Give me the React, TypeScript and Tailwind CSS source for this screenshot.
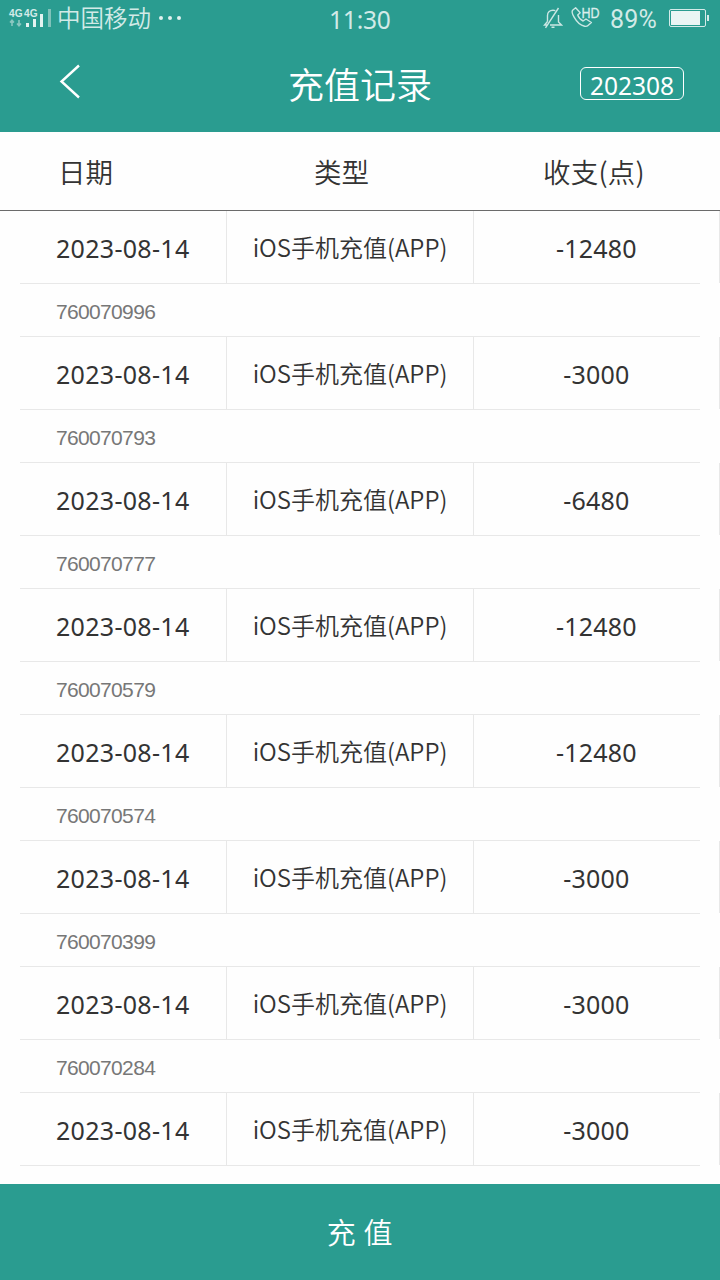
import React from "react";

const records = [
  { id: "760070996", date: "2023-08-14", amount: "-12480" },
  { id: "760070793", date: "2023-08-14", amount: "-3000" },
  { id: "760070777", date: "2023-08-14", amount: "-6480" },
  { id: "760070579", date: "2023-08-14", amount: "-12480" },
  { id: "760070574", date: "2023-08-14", amount: "-12480" },
  { id: "760070399", date: "2023-08-14", amount: "-3000" },
  { id: "760070284", date: "2023-08-14", amount: "-3000" },
  { id: "", date: "2023-08-14", amount: "-3000" },
];

function SignalIcon() {
  return (
    <svg width="44" height="22" viewBox="0 0 44 22" fill="none" className="shrink-0 overflow-visible">
      <g fill="#d4ebe9" fontFamily="Liberation Sans, sans-serif" fontSize="10" fontWeight="700">
        <text x="0" y="9.5" textLength="13.5" lengthAdjust="spacingAndGlyphs">4G</text>
        <text x="15" y="9.5" textLength="13.5" lengthAdjust="spacingAndGlyphs">4G</text>
      </g>
      <path d="M3 19v-5M1 15.500l2-2.200 2 2.200M10 13v5M8 16.500l2 2.200 2-2.200" stroke="#8ac7c0" strokeWidth="1.6" />
      <path d="M17 16h3v4h-3zM24 12h3v8h-3zM31 7h3v13h-3z" fill="#e4f3f1" />
      <path d="M39 2h3v18h-3z" fill="#80c2ba" />
    </svg>
  );
}

function MutedBellIcon() {
  return (
    <svg width="20" height="22" viewBox="0 0 20 22" fill="none" stroke="#cce7e4" strokeWidth="1.4" className="shrink-0">
      <path d="M4.500 14.500 1.500 18h3M4.500 14.500V8.500C4.500 5.200 7 3.200 10 3.200c.8 0 1.600.2 2.300.5M15.500 8v7l3 3H7M8.500 20.300h3M15.500 1 2.500 20.800" />
    </svg>
  );
}

function HdCallIcon() {
  return (
    <svg width="32" height="22" viewBox="0 0 32 22" fill="none" stroke="#cce7e4" strokeWidth="1.4" className="shrink-0 overflow-visible">
      <path d="M4.600 1.800 1.600 4.200c-.8 1-.3 3.800 1.500 7 2.500 4.500 6.500 8.300 10.500 9.100 1.600.3 2.600 0 3.400-.8l3.400-3-5.400-3.500-2.900 2c-2.200-1-4.500-3.500-5.400-6l2.500-2.300z" strokeLinejoin="round" />
      <text x="10.5" y="11.5" fill="#dceeec" stroke="#dceeec" strokeWidth=".3" fontFamily="Liberation Sans, sans-serif" fontSize="14.5" textLength="18" lengthAdjust="spacingAndGlyphs">HD</text>
    </svg>
  );
}

function BatteryIcon() {
  return (
    <svg width="41" height="20" viewBox="0 0 41 20" fill="none" className="shrink-0">
      <rect x=".5" y=".5" width="36" height="17" rx="1.500" stroke="#d4ebe9" />
      <path d="M2 2h29v14H2z" fill="#eaf5f4" />
      <path d="M38 6h2v6h-2z" fill="#d4ebe9" />
    </svg>
  );
}

function StatusBar() {
  return (
    <div className="grid h-9 grid-cols-[329px_214px_177px] text-[#d2eae7]">
      <div className="flex items-start pt-[7px] pl-[9px]">
        <SignalIcon />
        <span className="-mt-[6px] ml-[4px] font-['Noto_Sans_CJK_SC',sans-serif] text-[23.5px] leading-[32px] font-[350] whitespace-nowrap">中国移动</span>
        <svg width="24" height="4" viewBox="0 0 24 4" fill="#e0f1ef" className="mt-[9px] ml-[8px]">
          <circle cx="2" cy="2" r="2" />
          <circle cx="11" cy="2" r="2" />
          <circle cx="20" cy="2" r="2" />
        </svg>
      </div>
      <span className="pt-[4px] font-['Noto_Sans',sans-serif] text-[24.5px] leading-[32px] font-normal tracking-[-0.2px]">11:30</span>
      <div className="flex items-start pt-[7px]">
        <MutedBellIcon />
        <span className="-mt-px ml-[8px]"><HdCallIcon /></span>
        <span className="-mt-[3px] ml-[7px] w-[50px] font-[Roboto,sans-serif] text-[25px] leading-[32px] font-normal tracking-[0.2px]">89%</span>
        <span className="mt-[2px] ml-[9px]"><BatteryIcon /></span>
      </div>
    </div>
  );
}

export default function App() {
  return (
    <div className="flex h-[1280px] w-[720px] flex-col overflow-hidden bg-[#fefefe] font-['Noto_Sans_CJK_SC',sans-serif] text-[#333333]">
      <header className="h-[132px] shrink-0 bg-[#2a9c90] text-white">
        <StatusBar />
        <div className="grid h-24 grid-cols-[200px_320px_200px] items-center">
          <button className="flex items-center pl-[59px]">
            <svg width="24" height="36" viewBox="0 0 24 36" fill="none" stroke="white" strokeWidth="2.400" className="-mt-[7px]">
              <path d="M20 2.500 2.500 18.500 20 34.500" />
            </svg>
          </button>
          <h1 className="-mt-[3px] text-center text-[36px] leading-[48px] font-[350]">充值记录</h1>
          <div className="-mt-px flex pl-[60px]">
            <button className="flex h-[33px] w-[104px] items-center justify-center rounded-[6px] border border-white pt-[4px] font-['Noto_Sans',sans-serif] text-[24.5px] leading-[30px] font-normal">202308</button>
          </div>
        </div>
      </header>

      <div className="grid h-[79px] shrink-0 grid-cols-[227px_247px_246px] items-center border-b border-[#6b6b6b] text-[27.5px] leading-[40px] font-[350]">
        <span className="pl-[58px]">日期</span>
        <span className="pl-[87px]">类型</span>
        <span className="pl-[69px] tracking-[0.2px]">收支(点)</span>
      </div>

      <main className="flex flex-1 flex-col">
        {records.map((record, index) => (
          <section key={index}>
            <div className="grid h-[72px] grid-cols-[227px_247px_246px] font-['Noto_Sans','Noto_Sans_CJK_SC',sans-serif] text-[25px]">
              <div className="flex items-center border-r border-[#e8e8e8] pt-[3px] pl-[56px] tracking-[0.3px]">{record.date}</div>
              <div className="flex items-center justify-center border-r border-[#e8e8e8] font-['Noto_Sans_CJK_SC',sans-serif] text-[24px] font-[350] whitespace-nowrap">iOS手机充值(APP)</div>
              <div className="flex items-center justify-center border-r border-[#e8e8e8] pt-[3px] tracking-[0.2px]">{record.amount}</div>
            </div>
            <div className="mx-5 h-px bg-[#e8e8e8]" />
            {record.id && (
              <div className="mx-5 flex h-[53px] items-center border-b border-[#e8e8e8] pt-[4px] pl-[36px] font-['Liberation_Sans',sans-serif] text-[21px] tracking-[-0.66px] text-[#777777]">{record.id}</div>
            )}
          </section>
        ))}
      </main>

      <button className="h-24 shrink-0 bg-[#2a9c90] pb-[3px] text-[29px] leading-[40px] font-[350] tracking-[0.6px] text-white">充 值</button>
    </div>
  );
}
